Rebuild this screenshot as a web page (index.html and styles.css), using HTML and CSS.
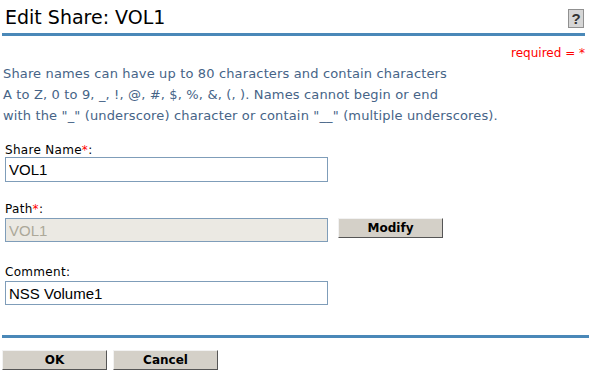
FILE: index.html
```html
<!DOCTYPE html>
<html lang="en">
<head>
    <meta charset="UTF-8">
    <title>Edit Share</title>
    <link rel="stylesheet" href="styles.css">
</head>
<body>
    <div class="page">
        <div class="header">
            <h1>Edit Share: VOL1</h1>
            <span class="help">?</span>
        </div>
        <div class="required">required = *</div>
        <p class="intro">Share names can have up to 80 characters and contain characters<br>
            A to Z, 0 to 9, _, !, @, #, $, %, &amp;, (, ). Names cannot begin or end<br>
            with the "_" (underscore) character or contain "__" (multiple underscores).</p>

        <div class="field first">
            <label>Share Name<span class="star">*</span>:</label>
            <input type="text" class="text" value="VOL1">
        </div>
        <div class="field">
            <label>Path<span class="star">*</span>:</label>
            <div class="row">
                <input type="text" class="text" value="VOL1" disabled>
                <button class="button">Modify</button>
            </div>
        </div>
        <div class="field last">
            <label>Comment:</label>
            <input type="text" class="text" value="NSS Volume1">
        </div>

        <div class="footer">
            <button class="button">OK</button>
            <button class="button">Cancel</button>
        </div>
    </div>
</body>
</html>
```

FILE: styles.css
```css
body {
    font-family: "DejaVu Sans", Verdana, sans-serif;
    background-color: #ffffff;
    margin: 0;
    padding: 0;
}
.page {
    padding: 0 0 0 2px;
}
.header {
    display: flex;
    align-items: center;
    justify-content: space-between;
    height: 33px;
    margin-right: 4px;
    border-bottom: 3px solid #4a88b8;
}
.header h1 {
    margin: 0 0 0 3px;
    font-size: 19px;
    font-weight: normal;
    color: #000000;
}
.help {
    box-sizing: border-box;
    width: 16px;
    height: 19px;
    margin: 3px 1px 0 0;
    background-color: #d6d6d6;
    border: 1px solid #909090;
    font: bold 15px "Liberation Sans", Arial, sans-serif;
    color: #333333;
    text-align: center;
    line-height: 17px;
}
.required {
    text-align: right;
    color: #ff0000;
    font-size: 12px;
    line-height: 14px;
    margin: 10px 4px 0 0;
}
.intro {
    margin: 3px 0 0 1px;
    font-size: 13px;
    letter-spacing: 0.15px;
    line-height: 21px;
    color: #466487;
}
.field {
    margin-top: 20px;
}
.field.first {
    margin-top: 17px;
}
.field.first label {
    margin-bottom: 0;
}
.field.last {
    margin-top: 23px;
}
.field label {
    display: block;
    font-size: 12px;
    line-height: 14px;
    letter-spacing: 0.3px;
    color: #000000;
    margin: 0 0 2px 3px;
}
.star {
    color: #ff0000;
}
.row {
    display: flex;
    align-items: flex-start;
    gap: 10px;
}
.text {
    display: block;
    box-sizing: border-box;
    width: 323px;
    height: 25px;
    margin: 0 0 0 3px;
    padding: 0 3px;
    border: 1px solid #7f9db9;
    font: 15px "Liberation Sans", Arial, sans-serif;
    color: #000000;
}
.text:disabled {
    height: 24px;
    background-color: #ebe9e3;
    color: #aca899;
}
.field.last .text {
    height: 24px;
}
.button {
    width: 105px;
    height: 20px;
    padding: 0;
    background-color: #d4d0c8;
    border: 1px solid;
    border-color: #f2f2f2 #555555 #555555 #f2f2f2;
    font: bold 12px "DejaVu Sans", Verdana, sans-serif;
    color: #000000;
}
.footer {
    margin-top: 30px;
    padding-top: 12px;
    border-top: 3px solid #4a88b8;
    display: flex;
    gap: 6px;
}
```
